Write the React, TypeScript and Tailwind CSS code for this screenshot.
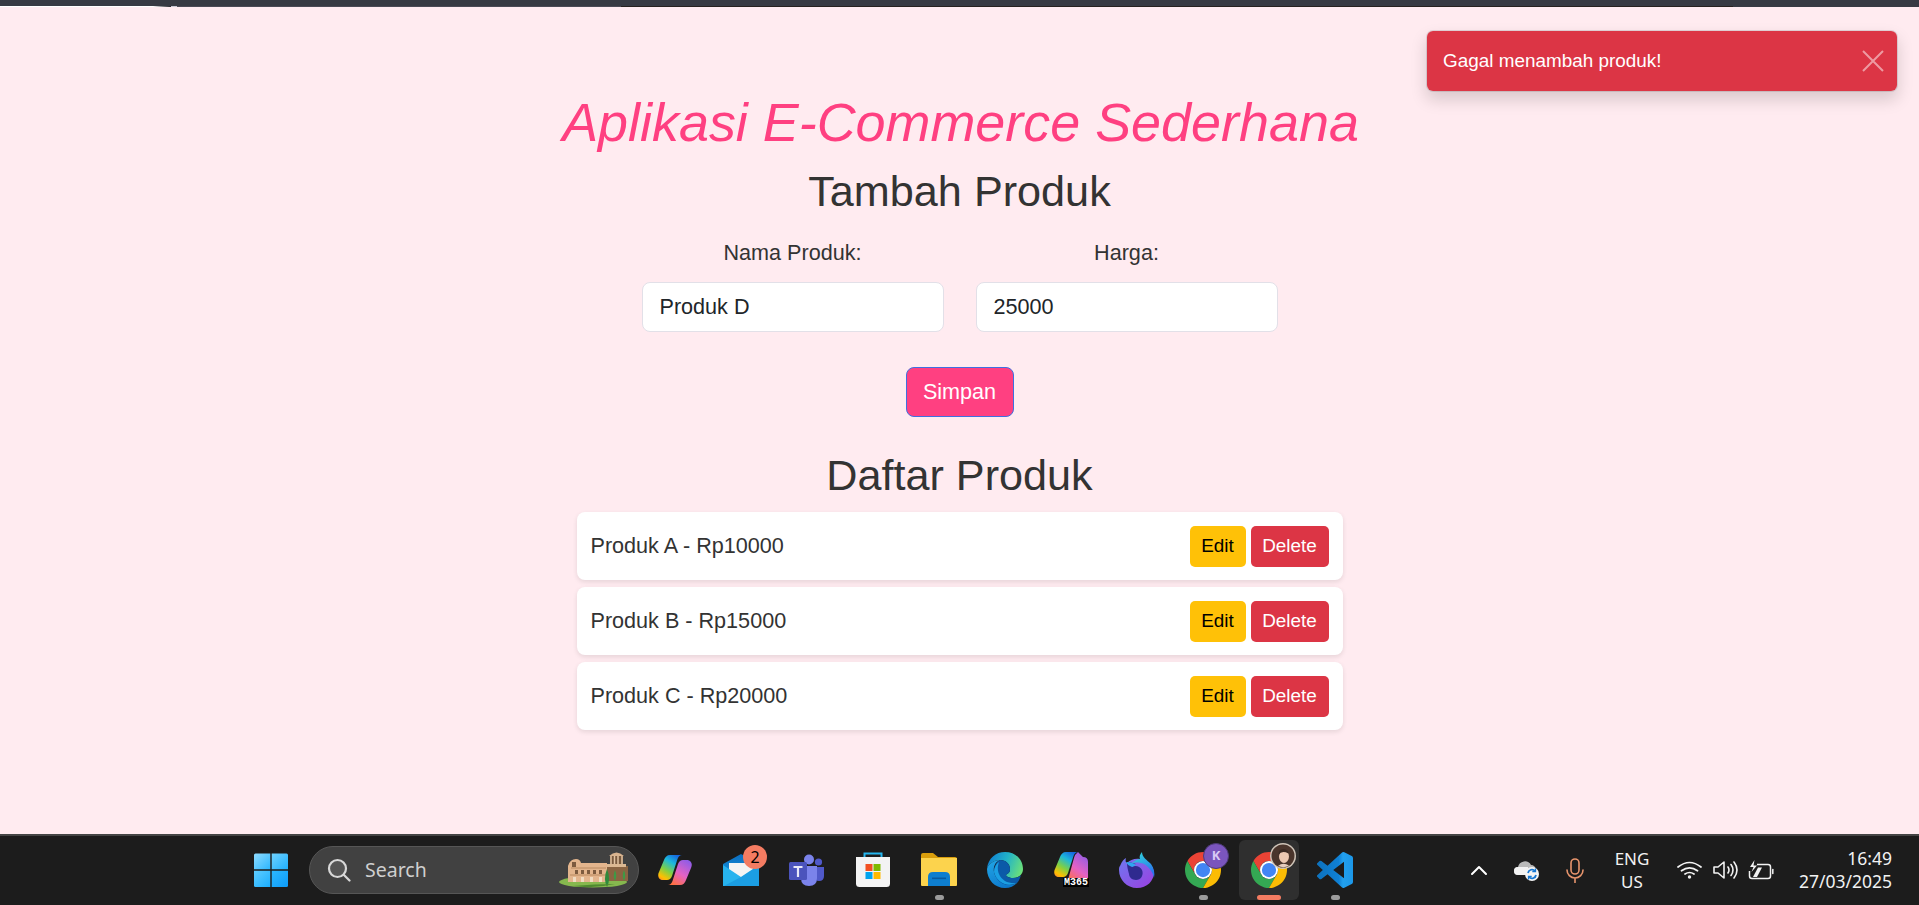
import React from "react";

const Dot = ({ active }: { active?: boolean }) =>
  active ? (
    <span className="absolute bottom-0 left-[18px] h-[5px] w-[24px] rounded-full bg-[#f47c62]" />
  ) : (
    <span className="absolute bottom-0 left-[26px] h-[5px] w-[9px] rounded-full bg-[#9b9b9b]" />
  );

const WindowsLogo = () => (
  <svg width="36" height="36" viewBox="0 0 36 36">
    <defs>
      <linearGradient id="w1" x1="0" y1="0" x2="1" y2="1">
        <stop offset="0" stopColor="#8fdcff" />
        <stop offset="1" stopColor="#2bb6ff" />
      </linearGradient>
      <linearGradient id="w2" x1="0" y1="0" x2="1" y2="1">
        <stop offset="0" stopColor="#6fd2ff" />
        <stop offset="1" stopColor="#1fb0ff" />
      </linearGradient>
      <linearGradient id="w3" x1="0" y1="0" x2="1" y2="1">
        <stop offset="0" stopColor="#5fcdff" />
        <stop offset="1" stopColor="#1aaeff" />
      </linearGradient>
      <linearGradient id="w4" x1="0" y1="0" x2="1" y2="1">
        <stop offset="0" stopColor="#2cb8ff" />
        <stop offset="1" stopColor="#0d9bf8" />
      </linearGradient>
    </defs>
    <path d="M1 3a1.5 1.5 0 0 1 1.5-1.5H17.300v15.800H1z" fill="url(#w1)" />
    <path d="M18.700 1.500H33.500A1.500 1.500 0 0 1 35 3v14.300H18.700z" fill="url(#w2)" />
    <path d="M1 18.700h16.300V35H2.500A1.500 1.500 0 0 1 1 33.500z" fill="url(#w3)" />
    <path d="M18.700 18.700H35v14.800a1.500 1.500 0 0 1-1.500 1.500H18.700z" fill="url(#w4)" />
  </svg>
);

const Colosseum = () => (
  <svg width="72" height="38" viewBox="0 0 72 38" className="ml-[1px]">
    <ellipse cx="34" cy="31" rx="34" ry="5.500" fill="#86b84e" />
    <path d="M46 15h23v15H46z" fill="#8a6442" />
    <path d="M48 13h19v3H48z" fill="#dcb892" />
    <path d="M51 5h13v8H51z" fill="#7a5a3e" />
    <path d="M52 5v8M55.500 5v8M59 5v8M63 5v8" stroke="#e2c4a2" strokeWidth="1.500" />
    <path d="M50 5q7.500-7 15 0z" fill="#d9b48f" />
    <path d="M9 15q2-7 8-7 4 0 5 4h26v19H9z" fill="#e3b58d" />
    <path d="M12 17h35M11 24h36" stroke="#b98a61" strokeWidth="1" />
    <path d="M13 11h4v5h-4zM16 19h3v4h-3zM22 19h3v4h-3zM28 19h3v4h-3zM34 19h3v4h-3zM40 19h3v4h-3z" fill="#7d5b3f" />
    <path d="M14 26h3v5h-3zM22 26h3v5h-3zM31 26h3v5h-3zM40 26h3v5h-3z" fill="#f1dcc2" />
    <path d="M48 36q-4-8 0-18 4 10 0 18z" fill="#2f8a3c" />
    <path d="M56 30q-2.500-5 0-11 2.500 6 0 11zM65 30q-2.500-5 0-11 2.500 6 0 11z" fill="#3d9a45" />
    <path d="M14 35q20 3 42-2-20 0-42 2z" fill="#4f8a2f" />
  </svg>
);

const Copilot = ({ label }: { label?: boolean }) => {
  const id = label ? "m" : "c";
  return (
    <svg width="34" height="30" viewBox="0 0 34 30" className={label ? "-mt-[6px]" : ""}>
      <defs>
        <linearGradient id={id + "a"} x1="0.750" y1="0" x2="0.150" y2="1">
          <stop offset="0" stopColor="#1767e0" />
          <stop offset="0.300" stopColor="#1cb8dc" />
          <stop offset="0.620" stopColor="#7fd044" />
          <stop offset="0.900" stopColor="#ffc000" />
          <stop offset="1" stopColor="#ff9a20" />
        </linearGradient>
        <linearGradient id={id + "b"} x1="0.850" y1="0" x2="0.250" y2="1">
          <stop offset="0" stopColor="#8b5ce8" />
          <stop offset="0.550" stopColor="#e462c4" />
          <stop offset="1" stopColor="#ff7040" />
        </linearGradient>
      </defs>
      <path d="M12 0H24q-3 0-4.500 4L14 21q-1.500 4-5 4H5C1 25-1 21 1 17L6 5C7 2 9 0 12 0Z" fill={"url(#" + id + "a)"} />
      {label ? (
        <path d="M21 30H10q3 0 4.500-4L20 6q1-4 4-6l5 5q5 0 5 5v16q0 4-4 4z" fill={"url(#" + id + "b)"} />
      ) : (
        <path d="M22 30H10q3 0 4.500-4L20 9q1.500-4 5-4h4c4 0 6 4 4 8L28 25c-1 3-3 5-6 5Z" fill={"url(#" + id + "b)"} />
      )}
    </svg>
  );
};

const Mail = () => (
  <svg width="36" height="34" viewBox="0 0 36 34">
    <defs>
      <linearGradient id="ml" x1="0" y1="0" x2="0" y2="1">
        <stop offset="0" stopColor="#0c6dbf" />
        <stop offset="1" stopColor="#19a7ec" />
      </linearGradient>
    </defs>
    <path d="M0 11 18 1l18 10v22H0z" fill="url(#ml)" />
    <path d="M6 10h24v7l-12 8-12-8z" fill="#f4f4f4" />
    <path d="M0 12l18 12 18-12v21H0z" fill="#27b3ee" />
    <path d="M36 33H1l17-9 18-12z" fill="#0f8ad8" opacity="0.500" />
  </svg>
);

const Teams = () => (
  <svg width="36" height="32" viewBox="0 0 36 32">
    <circle cx="29.500" cy="8" r="3.600" fill="#5059c9" />
    <path d="M24 13h11v9q0 5-5 5-4 0-6-3z" fill="#5059c9" />
    <circle cx="20" cy="5.500" r="5" fill="#7b83eb" />
    <path d="M12 12h16v12q0 8-8 8t-8-8z" fill="#7b83eb" />
    <rect x="0" y="8" width="18" height="18" rx="1.500" fill="#4b53bc" />
    <path d="M4.500 12h9v2h-3.400v9H7.900v-9H4.500z" fill="#e8e8f8" />
  </svg>
);

const Store = () => (
  <svg width="36" height="36" viewBox="0 0 36 36">
    <path d="M9.500 6V1.500h17V6" fill="none" stroke="#25b6ee" strokeWidth="2" />
    <path d="M1 5h34v26.500q0 3.500-3.500 3.500h-27Q1 35 1 31.500z" fill="#f3f3f3" />
    <rect x="10.500" y="12" width="7" height="7" fill="#f25022" />
    <rect x="18.500" y="12" width="7" height="7" fill="#7fba00" />
    <rect x="10.500" y="20" width="7" height="7" fill="#00a4ef" />
    <rect x="18.500" y="20" width="7" height="7" fill="#ffb900" />
  </svg>
);

const Folder = () => (
  <svg width="36" height="34" viewBox="0 0 36 34">
    <path d="M0 2q0-2 2-2h10l5 4h17q2 0 2 2v6H0z" fill="#d99e0c" />
    <path d="M0 5h36v27q0 1-1 1H1q-1 0-1-1z" fill="#fcd34d" />
    <path d="M7 33V24q0-5 5-5h12q5 0 5 5v9z" fill="#0e7ecf" />
    <rect x="11" y="24.500" width="14" height="1.600" fill="#085a9f" />
  </svg>
);

const Edge = () => (
  <svg width="36" height="36" viewBox="0 0 36 36">
    <defs>
      <linearGradient id="e1" x1="0" y1="0.300" x2="1" y2="0.600">
        <stop offset="0" stopColor="#0f7fd3" />
        <stop offset="0.500" stopColor="#22b3c8" />
        <stop offset="1" stopColor="#6be07a" />
      </linearGradient>
      <linearGradient id="e2" x1="0" y1="0" x2="0.600" y2="1">
        <stop offset="0" stopColor="#22a7e6" />
        <stop offset="1" stopColor="#0c78cc" />
      </linearGradient>
    </defs>
    <path d="M0 17C1 6 9 0 18 0c11 0 18 8 18 17 0 6-5 9-10 9-4 0-7-2-7-3 0-1 4-1 4-6 0-5-4-9-10-9C7 8 1 12 0 17z" fill="url(#e1)" />
    <path d="M0 17c1-5 7-9 13-9-5 2-7 7-6 12 2 9 12 16 23 11-3 3-7 5-12 5C8 36 0 28 0 17z" fill="url(#e2)" />
    <path d="M13 8c6 0 10 4 10 9 0 5-4 5-4 6 0 1 3 3 7 3 3 0 6-1 8-3-1 4-3 7-4 8-6 3-14 3-19-3-4-5-5-10-3-14 1-3 3-5 5-6z" fill="#0b5aa8" />
    <path d="M12 10c-3 2-5 6-5 10 2 9 12 16 23 11-8 1-15-2-18-9-2-5-1-9 0-12z" fill="#1a9fe3" />
  </svg>
);

const Firefox = () => (
  <svg width="36" height="36" viewBox="0 0 36 36">
    <defs>
      <linearGradient id="f1" x1="0" y1="0" x2="1" y2="1">
        <stop offset="0" stopColor="#6f78f0" />
        <stop offset="1" stopColor="#9b3fe0" />
      </linearGradient>
      <linearGradient id="f2" x1="0" y1="0" x2="0.500" y2="1">
        <stop offset="0" stopColor="#31e0d8" />
        <stop offset="1" stopColor="#2a74ee" />
      </linearGradient>
    </defs>
    <path d="M1 14C3 9 5 7 7 6c-1 3 0 5 1 5 3-3 8-5 13-4 7 1 13 7 14 13 0 9-7 16-17 16S0 28 0 18c0-2 0-3 1-4z" fill="url(#f1)" />
    <path d="M23 0c0 5 5 8 9 12 3 4 4 9 3 14-1-6-6-12-10-14-5-2-10-2-13 0 3-3 6-5 9-5-1-2 0-5 2-7z" fill="url(#f2)" />
    <path d="M8 11c3-1 5 0 9 1-3 1-4 2-4 3 3-2 8-1 10 3 2 5-1 10-6 10-4 0-7-3-7-6-1-4-2-7-2-11z" fill="#2f2a8f" />
    <path d="M7 10c4 0 8 1 10 3l-4 2c-3-1-5-3-6-5z" fill="#2fa6f0" />
  </svg>
);

const Chrome = () => (
  <svg width="36" height="36" viewBox="0 0 48 48">
    <path d="M44.780 12A24 24 0 0 0 3.220 12L13.600 30A12 12 0 0 1 24 12Z" fill="#ea4335" />
    <path d="M3.220 12A24 24 0 0 0 24 48L34.400 30A12 12 0 0 1 13.600 30Z" fill="#34a853" />
    <path d="M24 48A24 24 0 0 0 44.780 12L24 12A12 12 0 0 1 34.400 30Z" fill="#fbbc04" />
    <circle cx="24" cy="24" r="12" fill="#ffffff" />
    <circle cx="24" cy="24" r="9.500" fill="#4285f4" />
  </svg>
);

const Avatar = () => (
  <svg width="26" height="26" viewBox="0 0 26 26" className="absolute left-[31px] top-[3px]">
    <circle cx="13" cy="13" r="13" fill="#cfc4b8" />
    <circle cx="13" cy="13" r="11.500" fill="#4a352c" />
    <ellipse cx="14" cy="13.500" rx="5" ry="6.500" fill="#ebc8b2" />
    <path d="M8.500 12q3-5 10-1.500 0-4-5-4.500-5 0-5 6z" fill="#3a2a24" />
    <path d="M8 23q5-4 11-.5-5 3-11 .5z" fill="#e6cdbd" />
  </svg>
);

const VsCode = () => (
  <svg width="36" height="36" viewBox="0 0 24 24">
    <defs>
      <linearGradient id="vs" x1="0" y1="0" x2="1" y2="0">
        <stop offset="0" stopColor="#0d72bd" />
        <stop offset="0.600" stopColor="#0f80d4" />
        <stop offset="0.720" stopColor="#22a0ee" />
        <stop offset="1" stopColor="#1c97e8" />
      </linearGradient>
    </defs>
    <path
      d="M23.150 2.587L18.210.21a1.494 1.494 0 0 0-1.705.29l-9.460 8.630-4.120-3.128a.999.999 0 0 0-1.276.057L.327 7.261A1 1 0 0 0 .326 8.740L3.899 12 .326 15.260a1 1 0 0 0 .001 1.479L1.650 17.940a.999.999 0 0 0 1.276.057l4.120-3.128 9.460 8.630a1.492 1.492 0 0 0 1.704.290l4.942-2.377A1.500 1.500 0 0 0 24 20.060V3.939a1.500 1.500 0 0 0-.850-1.352zm-5.146 14.861L10.826 12l7.178-5.448v10.896z"
      fill="url(#vs)"
    />
  </svg>
);

const Cloud = () => (
  <svg width="26" height="22" viewBox="0 0 26 22">
    <path d="M4 16a4 4 0 0 1 0-8 7 7 0 0 1 13-2 5 5 0 0 1 5 5v5z" fill="#b9b9b9" />
    <path d="M4 16a4 4 0 0 1 0-8h10v8z" fill="#f2f2f2" />
    <circle cx="18" cy="15" r="7" fill="#f4f4f4" />
    <path d="M14 14a4 4 0 0 1 7-2M22 16a4 4 0 0 1-7 2" fill="none" stroke="#1677d2" strokeWidth="1.800" />
    <path d="M21.500 9.500v3.200h-3.200M14.500 20.500v-3.200h3.200" fill="none" stroke="#1677d2" strokeWidth="1.300" />
  </svg>
);

const Mic = () => (
  <svg width="18" height="25" viewBox="0 0 18 25" fill="none" stroke="#e8956d" strokeWidth="1.600" strokeLinecap="round">
    <rect x="5" y="1" width="8" height="15" rx="4" />
    <path d="M1 12a8 8 0 0 0 16 0M9 20v4.500" />
  </svg>
);

const Wifi = () => (
  <svg width="25" height="18" viewBox="0 0 25 18" fill="none" stroke="#f2f2f2" strokeWidth="1.700" strokeLinecap="round">
    <path d="M1 6q11.500-9 23 0M4.500 9.800q8-6 16 0M8 13q4.500-3 9 0" />
    <circle cx="12.500" cy="16" r="1.700" fill="#f2f2f2" stroke="none" />
  </svg>
);

const Speaker = () => (
  <svg width="25" height="20" viewBox="0 0 25 20" fill="none" stroke="#f2f2f2" strokeWidth="1.600" strokeLinecap="round" strokeLinejoin="round">
    <path d="M1 7h4l6-5v16l-6-5H1z" />
    <path d="M15 7q2 3 0 6M18 4.500q4 5.500 0 11M21 2q6 8 0 16" />
  </svg>
);

const Battery = () => (
  <svg width="26" height="21" viewBox="0 0 26 21" fill="none" stroke="#f2f2f2" strokeWidth="1.500" strokeLinejoin="round">
    <path d="M9 4.500h11q2.500 0 2.500 2.500v9q0 2.500-2.500 2.500H4Q1.500 18.500 1.500 16v-5" />
    <path d="M24.800 9.500v4" strokeLinecap="round" />
    <path d="M6.500 0 2 7h3.500L3.500 12 9 5.500H5.500z" fill="#f2f2f2" stroke="none" />
    <path d="M5 17l5-9.500h4L9 17z" fill="#f2f2f2" stroke="none" />
  </svg>
);

const Item = ({ children, dot, active }: { children: React.ReactNode; dot?: boolean; active?: boolean }) => (
  <div className={"relative flex h-[60px] w-[60px] items-center justify-center rounded-md " + (active ? "bg-[#2f2f2f]" : "")}>
    {children}
    {dot && <Dot active={active} />}
  </div>
);

const ProductRow = ({ text }: { text: string }) => (
  <li className="flex h-[68px] w-[766px] items-center justify-between rounded-lg bg-white px-[14px] shadow-[0_2px_5px_rgba(0,0,0,0.1)]">
    <span className="text-[21.6px] text-[#333333]">{text}</span>
    <div className="flex gap-[5px]">
      <button className="h-[41px] w-[56px] rounded-[5px] bg-[#ffc107] text-[18.9px] text-black">Edit</button>
      <button className="h-[41px] w-[78px] rounded-[5px] bg-[#dc3545] text-[18.9px] text-white">Delete</button>
    </div>
  </li>
);

export default function App() {
  return (
    <div className="relative flex h-[905px] w-[1919px] flex-col overflow-hidden bg-[#ffebf0] font-['Liberation_Sans',Arial,sans-serif]">
      <div className="flex h-[7px] shrink-0 flex-col bg-[#373a43]">
        <div className="mt-[6px] flex h-[1px]">
          <div className="w-[153px] bg-white" />
          <div className="w-[18px] bg-linear-to-r from-white to-[#22242a]" />
          <div className="w-[6px] bg-[#c9c9d4]" />
          <div className="w-[444px] bg-[#4a4a55]" />
          <div className="w-[1112px] bg-[#26211f]" />
        </div>
      </div>

      <main className="flex flex-1 flex-col items-center">
        <h1 className="ml-[2px] mt-[83px] text-[53.9px] italic leading-[65px] text-[#ff4081]">Aplikasi E-Commerce Sederhana</h1>
        <h2 className="mt-[10px] text-[43.2px] leading-[52px] text-[#333333]">Tambah Produk</h2>
        <form className="mt-[23px] flex gap-[32px]">
          <div className="flex w-[302px] flex-col items-center">
            <label className="text-[21.6px] leading-[26px] text-[#333333]">Nama Produk:</label>
            <input
              readOnly
              value="Produk D"
              className="mt-[16px] h-[50px] w-full rounded-lg border border-[#e2e0e8] bg-white px-[17px] text-[21.6px] text-[#212529]"
            />
          </div>
          <div className="flex w-[302px] flex-col items-center">
            <label className="text-[21.6px] leading-[26px] text-[#333333]">Harga:</label>
            <input
              readOnly
              value="25000"
              className="mt-[16px] h-[50px] w-full rounded-lg border border-[#e2e0e8] bg-white px-[17px] text-[21.6px] text-[#212529]"
            />
          </div>
        </form>
        <button className="mt-[35px] h-[50px] w-[108px] rounded-lg border-[1.5px] border-[#3f6fe0] bg-[#ff4081] text-[21.6px] text-white">
          Simpan
        </button>
        <h2 className="mt-[32px] text-[43.2px] leading-[52px] text-[#333333]">Daftar Produk</h2>
        <ul className="mt-[11px] flex flex-col gap-[7px]">
          <ProductRow text="Produk A - Rp10000" />
          <ProductRow text="Produk B - Rp15000" />
          <ProductRow text="Produk C - Rp20000" />
        </ul>
      </main>

      <div className="absolute left-[1426px] top-[30px] flex h-[62px] w-[472px] items-center justify-between rounded-[7px] border border-[rgba(0,0,0,0.1)] bg-[#dc3545] bg-clip-padding pl-[16px] pr-[13px] shadow-[0_8px_16px_rgba(0,0,0,0.15)]">
        <span className="text-[18.9px] text-white">Gagal menambah produk!</span>
        <svg width="22" height="22" viewBox="0 0 22 22" stroke="#ffffff" strokeOpacity="0.500" strokeWidth="2">
          <path d="M1 1l20 20M21 1L1 21" />
        </svg>
      </div>

      <footer className="flex h-[71px] shrink-0 items-start border-t-[2px] border-[#444444] bg-[#1c1c1c] pt-[4px] font-['Noto_Sans',sans-serif] text-[#f2f2f2]">
        <div className="ml-[241px] flex items-center">
          <Item>
            <WindowsLogo />
          </Item>
          <div className="my-[6px] ml-[8px] mr-[6px] flex h-[48px] w-[330px] items-center rounded-full border border-[#565656] bg-[#414141] pl-[17px] pr-[7px]">
            <svg width="24" height="24" viewBox="0 0 24 24" fill="none" stroke="#d8d8d8" strokeWidth="2.200" strokeLinecap="round">
              <circle cx="10.500" cy="10.500" r="8.500" fill="#555555" />
              <path d="M17 17l5.500 5.500" />
            </svg>
            <span className="ml-[14px] flex-1 text-[19.5px] text-[#cfcfcf]">Search</span>
            <Colosseum />
          </div>
          <div className="flex gap-[6px]">
            <Item>
              <Copilot />
            </Item>
            <Item>
              <Mail />
              <span className="absolute left-[32px] top-[5px] flex h-[24px] w-[24px] items-center justify-center rounded-full bg-[#f47c62] text-[16px] text-black">
                2
              </span>
            </Item>
            <Item>
              <Teams />
            </Item>
            <Item>
              <Store />
            </Item>
            <Item dot>
              <Folder />
            </Item>
            <Item>
              <Edge />
            </Item>
            <Item>
              <Copilot label />
              <span className="absolute left-[22px] top-[38px] w-[26px] bg-black text-center font-['Liberation_Mono',monospace] text-[10px] font-bold leading-[9px] text-white">
                M365
              </span>
            </Item>
            <Item>
              <Firefox />
            </Item>
            <Item dot>
              <Chrome />
              <span className="absolute left-[30px] top-[3px] flex h-[26px] w-[26px] items-center justify-center rounded-full border border-[#4d3a78] bg-[#7a55bd] text-[13px] font-bold text-[#d9c9f5]">
                K
              </span>
            </Item>
            <Item dot active>
              <Chrome />
              <Avatar />
            </Item>
            <Item dot>
              <VsCode />
            </Item>
          </div>
        </div>
        <div className="ml-[90px] flex h-[60px] items-center">
          <div className="flex w-[48px] justify-center">
            <svg width="18" height="11" viewBox="0 0 18 11" fill="none" stroke="#ffffff" strokeWidth="2" strokeLinecap="round" strokeLinejoin="round">
              <path d="M2 9l7-7 7 7" />
            </svg>
          </div>
          <div className="flex w-[48px] justify-center">
            <Cloud />
          </div>
          <div className="flex w-[48px] justify-center">
            <Mic />
          </div>
          <div className="flex w-[66px] flex-col items-center text-[17px] leading-[23px]">
            <span>ENG</span>
            <span>US</span>
          </div>
          <div className="ml-[6px] flex w-[36px] justify-center">
            <Wifi />
          </div>
          <div className="flex w-[36px] justify-center">
            <Speaker />
          </div>
          <div className="flex w-[36px] justify-center">
            <Battery />
          </div>
          <div className="flex w-[113px] flex-col items-end text-[17.5px] leading-[23.5px]">
            <span>16:49</span>
            <span>27/03/2025</span>
          </div>
        </div>
      </footer>
    </div>
  );
}
